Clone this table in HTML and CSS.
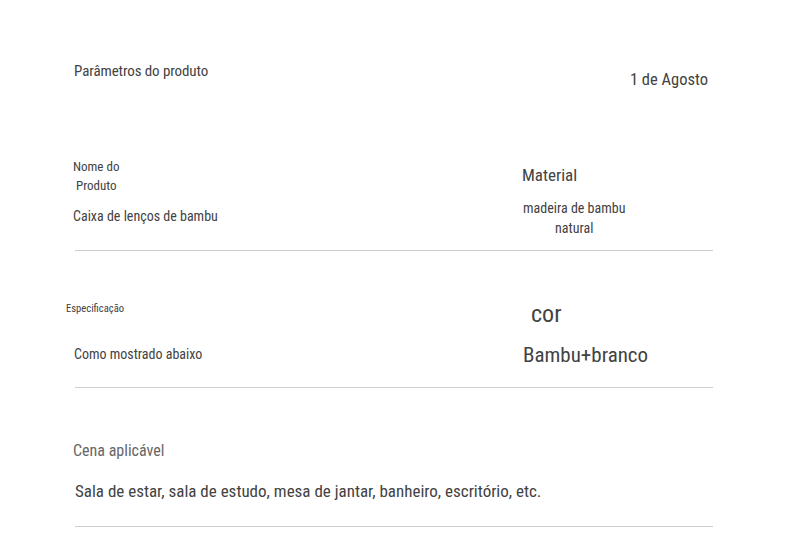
FILE: index.html
```html
<!DOCTYPE html>
<html lang="pt">
<head>
<meta charset="utf-8">
<link rel="stylesheet" href="styles.css">
</head>
<body>
<div class="page">
  <div class="header">
    <div class="title">Parâmetros do produto</div>
    <div class="date">1 de Agosto</div>
  </div>
  <div class="row row1">
    <div class="cell">
      <div class="label-name">Nome do<br>&nbsp;Produto</div>
      <div class="value-name">Caixa de lenços de bambu</div>
    </div>
    <div class="cell">
      <div class="label-material">Material</div>
      <div class="value-material">madeira de bambu<br>natural</div>
    </div>
  </div>
  <div class="row row2">
    <div class="cell">
      <div class="label-spec">Especificação</div>
      <div class="value-spec">Como mostrado abaixo</div>
    </div>
    <div class="cell">
      <div class="label-cor">cor</div>
      <div class="value-cor">Bambu+branco</div>
    </div>
  </div>
  <div class="row row3">
    <div class="cell">
      <div class="label-scene">Cena aplicável</div>
      <div class="value-scene">Sala de estar, sala de estudo, mesa de jantar, banheiro, escritório, etc.</div>
    </div>
  </div>
</div>
</body>
</html>
```
FILE: styles.css
```css
html, body {
  margin: 0;
  padding: 0;
  background: #fff;
}
body {
  font-family: "Roboto Condensed", "Roboto", sans-serif;
  font-stretch: condensed;
  color: #424242;
}
.page {
  width: 790px;
}
.header {
  display: flex;
  justify-content: space-between;
  align-items: flex-start;
  padding: 62px 82px 0 74px;
}
.title {
  font-size: 15px;
  line-height: 18px;
  letter-spacing: -0.1px;
}
.date {
  font-size: 16.5px;
  line-height: 20px;
  margin-top: 8px;
}
.row {
  display: grid;
  grid-template-columns: 447px 1fr;
  margin-left: 75px;
  width: 638px;
  border-bottom: 1px solid #cfcfcf;
}
.row1 {
  margin-top: 67px;
  padding-bottom: 12px;
}
.row2 {
  padding-top: 50px;
  padding-bottom: 19px;
}
.row3 {
  grid-template-columns: 1fr;
  padding-top: 53px;
  padding-bottom: 25px;
}
.cell {
  display: flex;
  flex-direction: column;
  align-items: flex-start;
}
.label-name {
  font-size: 13px;
  line-height: 19px;
  margin-left: -2px;
}
.value-name {
  font-size: 14px;
  line-height: 18px;
  margin-top: 12px;
  margin-left: -2px;
}
.label-material {
  font-size: 17px;
  line-height: 22px;
  margin-top: 7px;
}
.value-material {
  font-size: 14px;
  line-height: 20px;
  text-align: center;
  margin-top: 12px;
  margin-left: 1px;
}
.label-spec {
  font-size: 10.6px;
  line-height: 14px;
  margin-top: 1px;
  margin-left: -9px;
}
.value-spec {
  font-size: 14px;
  line-height: 18px;
  margin-top: 29px;
  margin-left: -1px;
}
.label-cor {
  font-size: 24px;
  line-height: 28px;
  margin-top: -1px;
  margin-left: 9px;
}
.value-cor {
  font-size: 21px;
  line-height: 26px;
  margin-top: 14px;
  margin-left: 1px;
}
.label-scene {
  font-size: 16px;
  line-height: 20px;
  margin-left: -2px;
  color: #666;
}
.value-scene {
  font-size: 17px;
  line-height: 20px;
  margin-top: 20px;
}
```
